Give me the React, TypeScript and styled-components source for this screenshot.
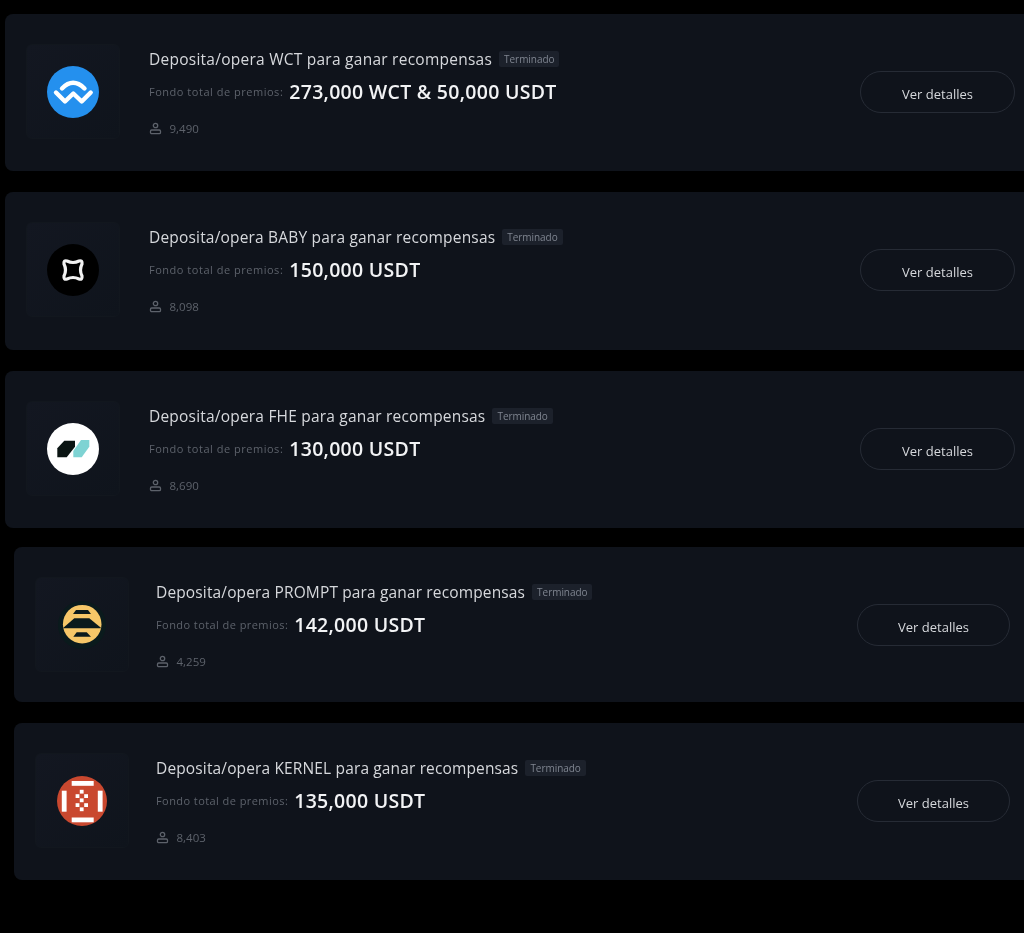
import React from 'react';
import styled, { createGlobalStyle } from 'styled-components';

const GlobalStyle = createGlobalStyle`
    html, body {
        margin: 0;
        background: #000000;
        overflow: hidden;
    }
    body {
        font-family: "Open Sans", "Liberation Sans", sans-serif;
    }
`;

const Page = styled.div`
    width: 1024px;
    height: 933px;
    padding-top: 14px;
    box-sizing: border-box;
    overflow: hidden;
    background: #000000;
    filter: blur(0.35px);
`;

const Group = styled.section<{ $indent: number; $gap: number }>`
    display: flex;
    flex-direction: column;
    gap: ${(p) => p.$gap}px;
    margin-left: ${(p) => p.$indent}px;
    margin-bottom: 19px;
`;

const Card = styled.article<{ $height: number; $right: number; $gap: number }>`
    display: flex;
    align-items: flex-start;
    gap: ${(p) => p.$gap}px;
    height: ${(p) => p.$height}px;
    padding: 30px ${(p) => p.$right}px 0 21px;
    box-sizing: border-box;
    background: #0f131b;
    border-radius: 8px 0 0 8px;
`;

const Thumb = styled.div`
    flex: none;
    display: flex;
    align-items: center;
    justify-content: center;
    width: 94px;
    height: 95px;
    box-sizing: border-box;
    background: linear-gradient(135deg, #131721 0%, #0f141c 100%);
    border: 1px solid #12171e;
    border-radius: 6px;
`;

const Info = styled.div`
    flex: 1;
    min-width: 0;
    display: flex;
    flex-direction: column;
    padding-top: 5px;
`;

const TitleRow = styled.div`
    display: flex;
    align-items: center;
    gap: 7px;
    height: 20px;
`;

const Title = styled.h3<{ $tracking: number }>`
    margin: 0;
    font-size: 15.5px;
    font-weight: 400;
    letter-spacing: ${(p) => p.$tracking}px;
    color: #d6d8dc;
    white-space: nowrap;
`;

const Tag = styled.span`
    display: flex;
    align-items: center;
    height: 16px;
    padding: 0 5px;
    background: #1c212b;
    border-radius: 2px;
    font-size: 10px;
    letter-spacing: -0.05px;
    color: #7f8590;
`;

const PrizeRow = styled.div`
    display: flex;
    align-items: center;
    gap: 6px;
    height: 28px;
    margin-top: 8px;
`;

const PrizeLabel = styled.span<{ $tracking: number }>`
    font-size: 11px;
    letter-spacing: ${(p) => p.$tracking}px;
    color: #5d626b;
`;

const PrizeValue = styled.strong`
    font-size: 19.5px;
    font-weight: 600;
    letter-spacing: 0.28px;
    color: #f2f3f5;
    white-space: nowrap;
`;

const Users = styled.div`
    display: flex;
    align-items: center;
    gap: 7.5px;
    height: 16px;
    margin-top: 15px;
    font-size: 11.5px;
    color: #5d626b;
`;

const DetailsButton = styled.button<{ $width: number }>`
    flex: none;
    align-self: flex-start;
    width: ${(p) => p.$width}px;
    height: 42px;
    margin-top: 27px;
    padding: 4px 0 0;
    background: transparent;
    border: 1px solid #262b35;
    border-radius: 21px;
    font-family: inherit;
    font-size: 13px;
    color: #d6d8dc;
`;

const UserIcon = () => (
    <svg width="13" height="13" viewBox="0 0 13 13" fill="none" stroke="#5d626b" strokeWidth="1.3">
        <circle cx="6.5" cy="3.5" r="2.2" />
        <rect x="1.5" y="8" width="10" height="3.6" rx="1.2" />
    </svg>
);

const WctLogo = () => (
    <svg width="52" height="52" viewBox="0 0 52 52">
        <circle cx="26" cy="26" r="26" fill="#2490ee" />
        <g fill="none" stroke="#ffffff" strokeWidth="4.4" strokeLinecap="round" strokeLinejoin="round">
            <path d="M15 22.5 Q26 11 37.5 22.5" />
            <path d="M9 26.5 L18 35.5 L26.3 27.5 L34.7 35.5 L43.7 26.5" />
        </g>
    </svg>
);

const BabyLogo = () => (
    <svg width="52" height="52" viewBox="0 0 52 52">
        <circle cx="26" cy="26" r="26" fill="#000000" />
        <path
            d="M20 17 Q26 20 32 17 Q35.5 16 35 20 Q32 26 35 32 Q35.5 36 32 35 Q26 32 20 35 Q16.5 36 17 32 Q20 26 17 20 Q16.5 16 20 17 Z"
            fill="none"
            stroke="#f2f2f2"
            strokeWidth="3.2"
        />
    </svg>
);

const FheLogo = () => (
    <svg width="52" height="52" viewBox="0 0 52 52">
        <circle cx="26" cy="26" r="26" fill="#ffffff" />
        <polygon points="34,17 42.3,17 42.3,23.7 34.7,34.3 26.3,34.3 26.3,28" fill="#7ed3d3" />
        <polygon points="17.3,17.7 28,17.7 28,23.7 19.7,34.3 10.3,34.3 10.3,25.3" fill="#0a1412" />
    </svg>
);

const PromptLogo = () => (
    <svg width="50" height="50" viewBox="0 0 50 50">
        <circle cx="25" cy="25" r="24" fill="#0a1a1c" />
        <circle cx="25.2" cy="24.2" r="19.3" fill="#f6c768" />
        <polygon points="19,10 31,10 34,14 16,14" fill="#0a1a1c" />
        <polygon points="17.3,18.3 32.3,18.3 44.5,28.3 5.8,28.3" fill="#0a1a1c" />
        <polygon points="19.7,32.3 29.7,32.3 34,36.7 16.3,36.7" fill="#0a1a1c" />
    </svg>
);

const KernelLogo = () => (
    <svg width="50" height="50" viewBox="0 0 50 50">
        <circle cx="25" cy="25" r="25" fill="#c9482f" />
        <g fill="#ffffff">
            <rect x="14.7" y="5" width="22" height="4.8" />
            <rect x="14.7" y="41.5" width="22" height="4.8" />
            <rect x="4.8" y="14.7" width="4.8" height="21" />
            <rect x="40.8" y="14.7" width="4.8" height="21" />
            <rect x="22.8" y="13.8" width="3.8" height="3.8" />
            <rect x="18.6" y="18.2" width="3.8" height="3.8" />
            <rect x="27.2" y="18.2" width="3.8" height="3.8" />
            <rect x="22.8" y="22.4" width="3.8" height="3.8" />
            <rect x="18.6" y="27.2" width="3.8" height="3.8" />
            <rect x="27.2" y="27.2" width="3.8" height="3.8" />
            <rect x="22.8" y="31.4" width="3.8" height="3.8" />
        </g>
    </svg>
);

interface Campaign {
    coin: string;
    prize: string;
    users: string;
    height: number;
    tracking: number;
    logo: React.ReactNode;
}

interface GroupLook {
    gap: number;
    right: number;
    buttonWidth: number;
    labelTracking: number;
}

const firstGroup: Campaign[] = [
    { coin: 'WCT', prize: '273,000 WCT & 50,000 USDT', users: '9,490', height: 157, tracking: 0.25, logo: <WctLogo /> },
    { coin: 'BABY', prize: '150,000 USDT', users: '8,098', height: 158, tracking: 0.18, logo: <BabyLogo /> },
    { coin: 'FHE', prize: '130,000 USDT', users: '8,690', height: 157, tracking: 0.2, logo: <FheLogo /> },
];

const secondGroup: Campaign[] = [
    { coin: 'PROMPT', prize: '142,000 USDT', users: '4,259', height: 155, tracking: 0.14, logo: <PromptLogo /> },
    { coin: 'KERNEL', prize: '135,000 USDT', users: '8,403', height: 157, tracking: 0.14, logo: <KernelLogo /> },
];

const firstLook: GroupLook = { gap: 29, right: 9, buttonWidth: 155, labelTracking: 0.52 };
const secondLook: GroupLook = { gap: 27, right: 14, buttonWidth: 153, labelTracking: 0.43 };

const renderCard = (c: Campaign, look: GroupLook) => (
    <Card key={c.coin} $height={c.height} $right={look.right} $gap={look.gap}>
        <Thumb>{c.logo}</Thumb>
        <Info>
            <TitleRow>
                <Title $tracking={c.tracking}>Deposita/opera {c.coin} para ganar recompensas</Title>
                <Tag>Terminado</Tag>
            </TitleRow>
            <PrizeRow>
                <PrizeLabel $tracking={look.labelTracking}>Fondo total de premios:</PrizeLabel>
                <PrizeValue>{c.prize}</PrizeValue>
            </PrizeRow>
            <Users>
                <UserIcon />
                {c.users}
            </Users>
        </Info>
        <DetailsButton $width={look.buttonWidth}>Ver detalles</DetailsButton>
    </Card>
);

export default function App() {
    return (
        <Page>
            <GlobalStyle />
            <Group $indent={5} $gap={21}>
                {firstGroup.map((c) => renderCard(c, firstLook))}
            </Group>
            <Group $indent={14} $gap={21}>
                {secondGroup.map((c) => renderCard(c, secondLook))}
            </Group>
        </Page>
    );
}
